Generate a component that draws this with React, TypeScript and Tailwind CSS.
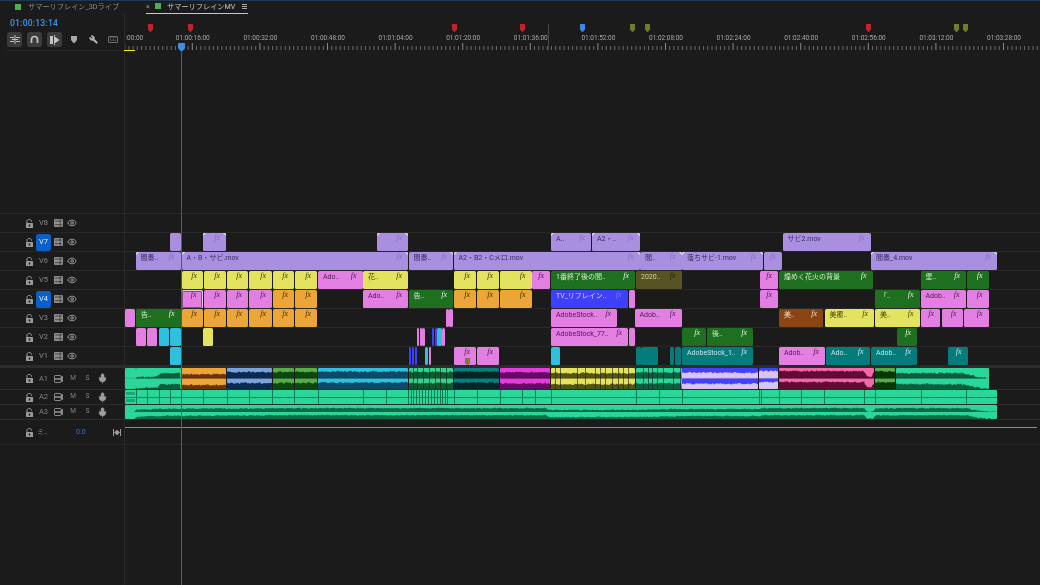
import React from "react";
import { Eye, Mic, Wrench } from "lucide-react";

type Clip = { s: number; e: number; c: string; t?: string; fx?: boolean; tl?: boolean; tr?: boolean; sel?: boolean; mark?: boolean };

const BG: Record<string, string> = {
  L: "bg-[#a88fe0] text-[#3a2c60]",
  Y: "bg-[#e3e35f] text-[#44440c]",
  P: "bg-[#e37fe2] text-[#4f1a50]",
  O: "bg-[#eca537] text-[#46300a]",
  G: "bg-[#1f6f20] text-[#cfe8cf]",
  C: "bg-[#2fc0e0] text-[#0b3a44]",
  T: "bg-[#047c7c] text-[#c4e8e8]",
  B: "bg-[#3f3fff] text-[#dcdcff]",
  N: "bg-[#8a4513] text-[#f0dcc8]",
  D: "bg-[#575222] text-[#d8d4a8]",
};
const FX: Record<string, string> = {
  L: "text-[#8570c4]",
  Y: "text-[#44440c]",
  P: "text-[#4f1a50]",
  O: "text-[#46300a]",
  G: "text-[#dcefdc]",
  C: "text-[#0b3a44]",
  T: "text-[#c4e8e8]",
  B: "text-[#7d7dff]",
  N: "text-[#f0dcc8]",
  D: "text-[#1e1c08]",
};

const c = (s: number, e: number, k: string, t?: string, fx = true, extra: Partial<Clip> = {}): Clip => ({ s, e, c: k, t, fx, ...extra });

const video: { name: string; on?: boolean; clips: Clip[] }[] = [
  { name: "V8", clips: [] },
  {
    name: "V7",
    on: true,
    clips: [
      c(170, 180.5, "L", undefined, false),
      c(203, 226, "L", undefined, true, { tl: true, tr: true }),
      c(377, 408, "L", undefined, true, { tl: true, tr: true }),
      c(551, 591, "L", "A..", true, { tl: true }),
      c(592, 639.5, "L", "A2・..", true, { tl: true, tr: true }),
      c(782.5, 870.5, "L", "サビ2.mov"),
    ],
  },
  {
    name: "V6",
    clips: [
      c(135.5, 180.5, "L", "間奏..", true, { tl: true }),
      c(181.5, 408, "L", "A・B・サビ.mov", true, { tl: true, tr: true }),
      c(408.5, 453, "L", "間奏..", true, { tr: true }),
      c(453.5, 639.5, "L", "A2・B2・Cメロ.mov", true, { tl: true, tr: true }),
      c(640, 681.5, "L", "間..", true, { tr: true }),
      c(682, 762.5, "L", "落ちサビ-1.mov", true, { tl: true, tr: true }),
      c(763.5, 781.5, "L", undefined, true),
      c(871, 997, "L", "間奏_4.mov", true, { tl: true, tr: true }),
    ],
  },
  {
    name: "V5",
    clips: [
      c(181.5, 203, "Y"), c(203.5, 226, "Y"), c(226.5, 248, "Y"), c(248.5, 272, "Y"), c(272.5, 294, "Y"), c(294.5, 317, "Y"),
      c(318, 362.5, "P", "Ado.."),
      c(363, 408, "Y", "花.."),
      c(453.5, 476, "Y"), c(476.5, 499, "Y"), c(499.5, 531.5, "Y"),
      c(532, 550, "P"),
      c(551, 635, "G", "1番終了後の間.."),
      c(636, 681.5, "D", "2020.."),
      c(759.5, 778, "P"),
      c(779, 872.5, "G", "煌めく花火の背景"),
      c(920.5, 966, "G", "堡.."),
      c(967, 988.5, "G"),
    ],
  },
  {
    name: "V4",
    on: true,
    clips: [
      c(181.5, 202.5, "P", undefined, true, { sel: true }),
      c(203.5, 226, "P"), c(226.5, 248, "P"), c(248.5, 272, "P"), c(272.5, 294, "O"), c(294.5, 317, "O"),
      c(363, 408, "P", "Ado.."),
      c(408.5, 453, "G", "告.."),
      c(453.5, 476, "O"), c(476.5, 499, "O"), c(499.5, 531.5, "O"),
      c(551, 627.5, "B", "TV_リフレイン.."),
      c(628.5, 635, "P", undefined, false),
      c(759.5, 778, "P"),
      c(875, 919.5, "G", "「.."),
      c(920.5, 965.5, "P", "Adob.."),
      c(967, 988.5, "P"),
    ],
  },
  {
    name: "V3",
    clips: [
      c(124.5, 135, "P", undefined, false),
      c(136, 180.5, "G", "告.."),
      c(181.5, 203, "O"), c(203.5, 226, "O"), c(226.5, 248, "O"), c(248.5, 272, "O"), c(272.5, 294, "O"), c(294.5, 317, "O"),
      c(446, 448.5, "P", undefined, false), c(449, 453, "P", undefined, false),
      c(551, 617, "P", "AdobeStock.."),
      c(634.5, 681.5, "P", "Adob.."),
      c(779, 823, "N", "美.."),
      c(824.5, 874, "Y", "美覆.."),
      c(875, 919.5, "Y", "美.."),
      c(920.5, 940, "P"), c(941.5, 962.5, "P"), c(964, 988.5, "P"),
    ],
  },
  {
    name: "V2",
    clips: [
      c(136, 146, "P", undefined, false), c(147, 157, "P", undefined, false),
      c(158.5, 169, "C", undefined, false), c(170, 180.5, "C", undefined, false),
      c(203, 212.5, "Y", undefined, false),
      c(417, 419, "P", undefined, false), c(419.5, 421.5, "P", undefined, false), c(422, 425, "P", undefined, false),
      c(432, 434, "B", undefined, false), c(434.5, 436.5, "B", undefined, false), c(437, 441.5, "C", undefined, false), c(442, 445, "P", undefined, false),
      c(551, 628, "P", "AdobeStock_77.."),
      c(628.5, 635, "P", undefined, false),
      c(681.5, 706, "G"),
      c(707, 753, "G", "後.."),
      c(896.5, 917, "G"),
    ],
  },
  {
    name: "V1",
    clips: [
      c(170, 180.5, "C", undefined, false),
      c(408.5, 411, "B", undefined, false), c(411.5, 414, "B", undefined, false), c(414.5, 417, "B", undefined, false),
      c(425, 428, "C", undefined, false), c(429, 431, "P", undefined, false),
      c(453.5, 476, "P", undefined, true, { mark: true }), c(476.5, 499, "P"),
      c(551, 559.5, "C", undefined, false),
      c(636, 640.5, "T", undefined, false), c(641, 657.5, "T", undefined, false),
      c(670, 674, "T", undefined, false), c(674.5, 680.5, "T", undefined, false),
      c(682, 753, "T", "AdobeStock_1.."),
      c(779, 825, "P", "Adob.."),
      c(826, 869.5, "T", "Ado.."),
      c(871, 917, "T", "Adob.."),
      c(947.5, 967.5, "T"),
    ],
  },
];

type Audio = { s: number; e: number; bg: string; wave: string; env?: number[][]; h?: number; cuts?: number[] };
const MINT = "#2bd69b";
const DG = "#0c5f3e";
const a1: Audio[] = [
  { s: 124.5, e: 135.5, bg: MINT, wave: DG, h: 0 },
  { s: 136, e: 180.5, bg: MINT, wave: DG, env: [[136, 0.12], [157, 0.2], [160, 0.5], [180, 0.5]] },
  { s: 181, e: 226, bg: "#eca537", wave: "#6e3208", h: 0.42 },
  { s: 226.5, e: 272, bg: "#7ba2da", wave: "#0b2a52", h: 0.62 },
  { s: 272.5, e: 294, bg: "#58ad48", wave: "#0c4610", h: 0.62 },
  { s: 294.5, e: 317, bg: "#58ad48", wave: "#0c4610", h: 0.62 },
  { s: 318, e: 408, bg: "#2fc0e0", wave: "#0c4a68", h: 0.66 },
  { s: 408.5, e: 453, bg: "#38cf90", wave: "#0c5a30", h: 0.62, cuts: [412.5, 417, 423, 429, 435, 440, 446] },
  { s: 454, e: 499, bg: "#0a7e7e", wave: "#022626", h: 0.66 },
  { s: 499.5, e: 550, bg: "#e53cdc", wave: "#640a66", h: 0.58 },
  { s: 551, e: 635, bg: "#e3e35f", wave: "#545410", h: 0.5, cuts: [555, 560, 577, 585, 595, 600, 605, 612, 618, 623, 628] },
  { s: 636, e: 681.5, bg: MINT, wave: DG, h: 0.58, cuts: [643, 648, 652, 657, 663, 673, 680] },
  { s: 682, e: 758, bg: "#4141ff", wave: "#dcc4f2", h: 0.55 },
  { s: 759, e: 778, bg: "#4141ff", wave: "#dcc4f2", h: 0.72 },
  { s: 779, e: 874, bg: "#f06aa8", wave: "#650a34", env: [[779, 0.72], [864, 0.7], [867, 0.2], [871, 0.15], [874, 0.6]] },
  { s: 875, e: 895, bg: "#58ad48", wave: "#063806", h: 0.68 },
  { s: 896, e: 988.5, bg: MINT, wave: DG, env: [[896, 0.52], [964, 0.5], [975, 0.22], [988, 0.05]] },
];

const a2Ticks = [135.7, 147, 158.7, 170, 203, 227, 248.7, 272, 294, 317.7, 363, 385.7, 408, 410.5, 413, 416, 419, 422, 425, 428, 431, 434, 437, 439.5, 442, 444.5, 447, 454, 477, 500, 522, 534.7, 551, 636, 659, 682, 759, 761, 779, 801, 824, 864, 875, 921, 966];

function wavePath(seed: number, w: number, h: number, env: (x: number) => number, jag = 0.08) {
  let r = seed * 9301 + 49297;
  const next = () => {
    r = (r * 9301 + 49297) % 233280;
    return r / 233280;
  };
  let d = `M0 ${h}`;
  for (let x = 0; x <= w; x += 1) {
    const e = env(x);
    const v = e <= 0 ? 0 : Math.max(0, Math.min(1, e + (next() - 0.5) * jag * 2));
    d += `L${x} ${(h - v * h).toFixed(2)}`;
  }
  return d + `L${w} ${h}Z`;
}

function envOf(a: { s: number; env?: number[][]; h?: number }) {
  const pts = a.env;
  return (x: number) => {
    if (!pts) return a.h ?? 0;
    const X = x + a.s;
    if (X <= pts[0][0]) return pts[0][1];
    for (let i = 1; i < pts.length; i++) {
      if (X <= pts[i][0]) {
        const t = (X - pts[i - 1][0]) / (pts[i][0] - pts[i - 1][0]);
        return pts[i - 1][1] + t * (pts[i][1] - pts[i - 1][1]);
      }
    }
    return pts[pts.length - 1][1];
  };
}

function Corner({ right }: { right?: boolean }) {
  return (
    <svg width="3" height="3" viewBox="0 0 3 3" className={right ? "absolute top-0 right-0" : "absolute top-0 left-0"}>
      <path d={right ? "M0 0H3V3Z" : "M0 0H3L0 3Z"} fill="#e8e8e8" />
    </svg>
  );
}

function VClip({ k }: { k: Clip }) {
  return (
    <div
      className={`absolute top-0 h-[18px] rounded-[1.5px] flex items-start overflow-hidden leading-[10px] text-[7px] ${BG[k.c]}`}
      style={{ left: k.s - 125, width: k.e - k.s }}
    >
      {k.tl && <Corner />}
      {k.tr && <Corner right />}
      {k.sel && <div className="absolute inset-[0.5px] border border-[#6a5a6a] outline outline-1 outline-[#d8d8d8] rounded-[1px]" />}
      {k.t && <span className="pl-[5px] pt-[0.5px] whitespace-nowrap truncate min-w-0">{k.t}</span>}
      {k.fx && <span className={`ml-auto pr-[6px] font-['Liberation_Serif',serif] italic text-[8px] leading-[10px] shrink-0 ${FX[k.c]}`}>fx</span>}
      {k.mark && (
        <svg width="5" height="7" viewBox="0 0 5 7" className="absolute left-[11.5px] top-[11px]">
          <path d="M0 0H5V5L3.2 7H1.8L0 5Z" fill="#757f3c" />
        </svg>
      )}
    </div>
  );
}

function AClip({ a, i }: { a: Audio; i: number }) {
  const w = a.e - a.s;
  const env = envOf(a);
  return (
    <div className="absolute top-0 h-[21px] rounded-[1px] overflow-hidden flex flex-col" style={{ left: a.s - 125, width: w, background: a.bg }}>
      {[0, 1].map((ch) => (
        <svg key={ch} width={w} height="10.5" viewBox={`0 0 ${w} 10`} preserveAspectRatio="none" className="block">
          <path d={wavePath(i * 7 + ch + 3, w, 10, env)} fill={a.wave} />
          <rect x="0" y="9.4" width={w} height="0.6" fill="#000" opacity="0.18" />
        </svg>
      ))}
      {a.cuts?.map((x) => (
        <div key={x} className="absolute top-0 bottom-0 w-px bg-[#1a1a1a] opacity-60" style={{ left: x - a.s }} />
      ))}
    </div>
  );
}

function Lock() {
  return (
    <svg width="7" height="9" viewBox="0 0 7 9" className="shrink-0">
      <path d="M1 4V2.2C1 1 2 .5 3.2.5S5.5 1 5.5 2.2V2.8" fill="none" stroke="#9a9a9a" strokeWidth="1" />
      <rect x="0" y="4" width="7" height="5" rx=".6" fill="#9a9a9a" />
      <rect x="2.7" y="5.5" width="1.6" height="2" fill="#1b1b1b" />
    </svg>
  );
}
function Film() {
  return (
    <svg width="9" height="8" viewBox="0 0 9 8" className="shrink-0">
      <rect x="0" y="0" width="9" height="8" rx="1" fill="#8d8d8d" />
      <rect x="1" y="1.5" width="7" height="1" fill="#1b1b1b" opacity=".6" />
      <rect x="1" y="5.2" width="7" height="1" fill="#1b1b1b" opacity=".6" />
      <rect x="5.6" y="0" width="1" height="8" fill="#1b1b1b" opacity=".5" />
    </svg>
  );
}
function Speaker() {
  return (
    <svg width="9" height="8" viewBox="0 0 9 8" className="shrink-0">
      <rect x=".5" y=".5" width="6.5" height="7" rx=".6" fill="none" stroke="#8a8a8a" />
      <path d="M.5 3.2H9V4.8H.5Z" fill="#8a8a8a" />
      <path d="M7 1.8L9 .8V7.2L7 6.2Z" fill="#8a8a8a" />
    </svg>
  );
}

function VHead({ name, on }: { name: string; on?: boolean }) {
  return (
    <div className="w-[125px] shrink-0 border-r border-[#2a2a2a] flex items-center pl-[26px] h-full">
      <Lock />
      <span className={`ml-[3px] w-[15px] h-[17px] rounded-[2.5px] flex items-center justify-center text-[7.5px] ${on ? "bg-[#0a5fc9] text-[#dfe9f7]" : "text-[#8a8a8a]"}`}>{name}</span>
      <span className="ml-[2.5px]"><Film /></span>
      <Eye size={10} strokeWidth={2} className="ml-[4.5px] text-[#a8a8a8]" />
    </div>
  );
}

function AHead({ name }: { name: string }) {
  return (
    <div className="w-[125px] shrink-0 border-r border-[#2a2a2a] flex items-center pl-[26px] h-full text-[6.5px] text-[#808080]">
      <Lock />
      <span className="ml-[3px] w-[15px] text-center text-[7.5px]">{name}</span>
      <span className="ml-[2.5px]"><Speaker /></span>
      <span className="ml-[6.5px] w-[8px] text-center">M</span>
      <span className="ml-[6.5px] w-[8px] text-center">S</span>
      <Mic size={11} strokeWidth={1.6} fill="#a0a0a0" className="ml-[5px] text-[#a0a0a0]" />
    </div>
  );
}

function Marker({ x, color }: { x: number; color: string }) {
  return (
    <svg width="5" height="8" viewBox="0 0 5 8" className="absolute top-[9.5px]" style={{ left: x - 125 - 2.5 }}>
      <path d="M0 0H5V5.2L2.9 8H2.1L0 5.2Z" fill={color} />
    </svg>
  );
}

const t0 = 124.2;
const step = 67.6;
const labels = ["01:00:16:00", "01:00:32:00", "01:00:48:00", "01:01:04:00", "01:01:20:00", "01:01:36:00", "01:01:52:00", "01:02:08:00", "01:02:24:00", "01:02:40:00", "01:02:56:00", "01:03:12:00", "01:03:28:00"];

function Ruler() {
  const minors: React.ReactNode[] = [];
  for (let k = 0; k < 15; k++) {
    for (let m = 0; m < 16; m++) {
      const x = t0 - 125 + k * step + (m * step) / 16;
      minors.push(
        m === 0 ? (
          <rect key={`${k}-${m}`} x={x} y="29" width="1" height="7" fill="#8a8a8a" />
        ) : (
          <rect key={`${k}-${m}`} x={x} y="32" width="1" height="4" fill="#6a6a6a" />
        )
      );
    }
  }
  return (
    <div className="relative flex-1 h-full">
      <svg width="915" height="37" className="absolute left-0 top-0">{minors}</svg>
      <div className="absolute top-[10px] left-[422.5px] w-px h-[26px] bg-[#484848]" />
      {[[150, "#c4202e"], [190, "#c4202e"], [454.7, "#c4202e"], [522.7, "#c4202e"], [582.7, "#3a86ea"], [632.7, "#6f7d25"], [647.3, "#6f7d25"], [868.7, "#c4202e"], [956.7, "#6f7d25"], [965.3, "#6f7d25"]].map(([x, col]) => (
        <Marker key={x as number} x={x as number} color={col as string} />
      ))}
      <span className="absolute left-[0.5px] top-[19px] text-[6.5px] leading-[10px] text-[#a8a8a8]">:00:00</span>
      {labels.map((l, i) => (
        <span key={l} className="absolute top-[19px] -translate-x-1/2 text-[6.5px] leading-[10px] text-[#a8a8a8] whitespace-nowrap" style={{ left: t0 - 124 + (i + 1) * step }}>
          {l}
        </span>
      ))}
      <div className="absolute left-[-1px] top-[35.5px] w-[11px] h-[1.5px] bg-[#f0f000]" />
    </div>
  );
}

function ToolBtn({ children }: { children: React.ReactNode }) {
  return <div className="w-[15px] h-[14.5px] rounded-[2.5px] bg-[#3b3b3b] flex items-center justify-center">{children}</div>;
}

export default function App() {
  const a3Env = envOf({
    s: 0,
    env: [[124, 0], [134, 0], [135.5, 0.3], [160, 0.45], [300, 0.55], [546, 0.55], [548, 0.28], [640, 0.3], [680, 0.42], [760, 0.42], [762, 0.55], [864, 0.55], [866, 0.05], [873, 0.05], [875, 0.55], [966, 0.55], [975, 0.25], [985, 0.05], [997, 0.03]],
  });
  const a3Path = (seed: number) => wavePath(seed, 872.5, 7, (x) => a3Env(x + 124.5), 0.08);
  return (
    <div className="relative w-[1040px] h-[585px] overflow-hidden bg-[#1b1b1b] flex flex-col blur-[0.3px] font-['Roboto','Noto_Sans_CJK_JP',sans-serif]">
      {/* tabs */}
      <div className="h-[14px] shrink-0 border-t border-[#1d3850] flex items-start text-[7.2px] leading-[12px]">
        <span className="ml-[15px] mt-[2.5px] w-[6px] h-[6px] bg-[#4cae50]" />
        <span className="ml-[7px] text-[#8a8a8a] whitespace-nowrap">サマーリフレイン_3Dライブ</span>
        <div className="absolute left-[146px] top-0 w-[102px] h-[14px] border-b border-[#c8c8c8] flex items-start text-[#c4c4c4]">
          <span className="text-[7px] leading-[14px] w-[9px] text-[#9a9a9a]">×</span>
          <span className="mt-[3px] w-[6px] h-[6px] bg-[#4cae50]" />
          <span className="ml-[6px] mt-[1px] whitespace-nowrap">サマーリフレインMV</span>
          <span className="ml-auto mr-px mt-[4px] w-[5px] h-[5px] border-y border-[#aaa] flex items-center"><span className="w-full h-px bg-[#aaa]" /></span>
        </div>
      </div>
      {/* header */}
      <div className="h-[37px] shrink-0 flex">
        <div className="w-[125px] shrink-0 border-r border-[#2a2a2a] relative flex flex-col">
          <div className="h-[18px] pl-[10px] pt-[4px] text-[8.5px] leading-[10px] font-semibold text-[#3a8ee6] tracking-[0.2px]">01:00:13:14</div>
          <div className="flex items-center h-[15px] pl-[7px]">
            <ToolBtn>
              <svg width="10" height="9" viewBox="0 0 10 9" fill="none" stroke="#bdbdbd" strokeWidth="1">
                <path d="M5 0V9" /><path d="M0 2.5H4M1.8 4.5H8.2M6 2.5H10M0 6.5H4M6 6.5H10" />
              </svg>
            </ToolBtn>
            <span className="w-[5px]" />
            <ToolBtn>
              <svg width="9" height="9" viewBox="0 0 9 9" fill="none" stroke="#c4c4c4" strokeWidth="1.7">
                <path d="M1.5 8V4.5a3 3 0 0 1 6 0V8" />
              </svg>
            </ToolBtn>
            <span className="w-[5px]" />
            <ToolBtn>
              <svg width="10" height="10" viewBox="0 0 10 10" fill="#c4c4c4">
                <path d="M0 1H3V9H0ZM4 1L9.5 5 4 9ZM4 0h1v1H4ZM4 9h1v1H4Z" />
              </svg>
            </ToolBtn>
            <svg width="6" height="7" viewBox="0 0 6 7" className="ml-[9px]"><path d="M0 0H6V4L3.6 7H2.4L0 4Z" fill="#a8a8a8" /></svg>
            <Wrench size={9} strokeWidth={2.5} fill="#b0b0b0" className="ml-[12px] text-[#b0b0b0] -scale-x-100" />
            <span className="ml-[10px] w-[10px] h-[7px] border border-[#707070] rounded-[1px] text-[4.5px] leading-[5px] text-center text-[#808080]">CC</span>
          </div>
          <div className="absolute bottom-0 left-[6px] right-0 h-px bg-[#262626]" />
        </div>
        <Ruler />
      </div>
      {/* empty upper area */}
      <div className="h-[162px] shrink-0 flex">
        <div className="w-[125px] shrink-0 border-r border-[#2a2a2a]" />
      </div>
      {/* video tracks */}
      {video.map((tr) => (
        <div key={tr.name} className="h-[19px] shrink-0 flex border-t border-[#282828]">
          <VHead name={tr.name} on={tr.on} />
          <div className="relative flex-1 h-full">
            {tr.clips.map((k) => <VClip key={k.s} k={k} />)}
          </div>
        </div>
      ))}
      <div className="h-[3px] shrink-0 bg-[#2b2b2b]" />
      {/* A1 */}
      <div className="h-[22px] shrink-0 flex border-b border-[#2b2b2b]">
        <AHead name="A1" />
        <div className="relative flex-1 h-full">
          {a1.map((a, i) => <AClip key={a.s} a={a} i={i} />)}
        </div>
      </div>
      {/* A2 */}
      <div className="h-[15px] shrink-0 flex border-b border-[#2b2b2b]">
        <AHead name="A2" />
        <div className="relative flex-1 h-full">
          <div className="absolute left-[-0.5px] top-0 w-[872.5px] h-[14px] bg-[#2bd69b] rounded-[1px] overflow-hidden">
            <div className="absolute left-0 right-0 top-[6.5px] h-px bg-[#13885f]" />
            {a2Ticks.map((x) => <div key={x} className="absolute top-0 bottom-0 w-px bg-[#0f7a54]" style={{ left: x - 124.5 }} />)}
            <div className="absolute left-[1px] top-[2px] w-[9px] h-[3px] bg-[#16a878]" />
            <div className="absolute left-[1px] top-[9px] w-[9px] h-[3px] bg-[#16a878]" />
          </div>
        </div>
      </div>
      {/* A3 */}
      <div className="h-[15px] shrink-0 flex border-b border-[#2b2b2b]">
        <AHead name="A3" />
        <div className="relative flex-1 h-full">
          <div className="absolute left-[-0.5px] top-0 w-[872.5px] h-[14px] bg-[#2bd69b] rounded-[1px] overflow-hidden flex flex-col">
            {[1, 2].map((s) => (
              <svg key={s} width="872.5" height="7" viewBox="0 0 872.5 7" className="block">
                <path d={a3Path(s)} fill="#0c6a44" />
              </svg>
            ))}
          </div>
        </div>
      </div>
      {/* Mix */}
      <div className="h-[25px] shrink-0 flex border-b border-[#262626]">
        <div className="w-[125px] shrink-0 border-r border-[#2a2a2a] flex items-center pl-[26px] text-[7px] text-[#8a8a8a] relative">
          <Lock />
          <span className="ml-[4px]">ミ..</span>
          <span className="absolute left-[76px] text-[#3a78c4]">0.0</span>
          <svg width="8" height="7" viewBox="0 0 8 7" className="absolute left-[113px]" fill="#9a9a9a">
            <path d="M0 0H1V7H0ZM7 0H8V7H7ZM1 3.5L4 .8V6.2ZM7 3.5L4 .8V6.2Z" />
          </svg>
        </div>
        <div className="relative flex-1 h-full">
          <div className="absolute left-0 top-[6.5px] w-[912px] h-px bg-[#8a8a8a]" />
        </div>
      </div>
      <div className="flex-1 flex">
        <div className="w-[125px] shrink-0 border-r border-[#2a2a2a]" />
      </div>
      {/* playhead */}
      <div className="absolute left-[181px] top-[43px] bottom-0 w-px bg-[#41607f]" />
      <svg width="7" height="8" viewBox="0 0 7 8" className="absolute left-[178px] top-[42.5px]">
        <path d="M0 .8Q0 0 .8 0H6.2Q7 0 7 .8V5L4.5 8H2.5L0 5Z" fill="#3a8ee6" />
      </svg>
    </div>
  );
}
